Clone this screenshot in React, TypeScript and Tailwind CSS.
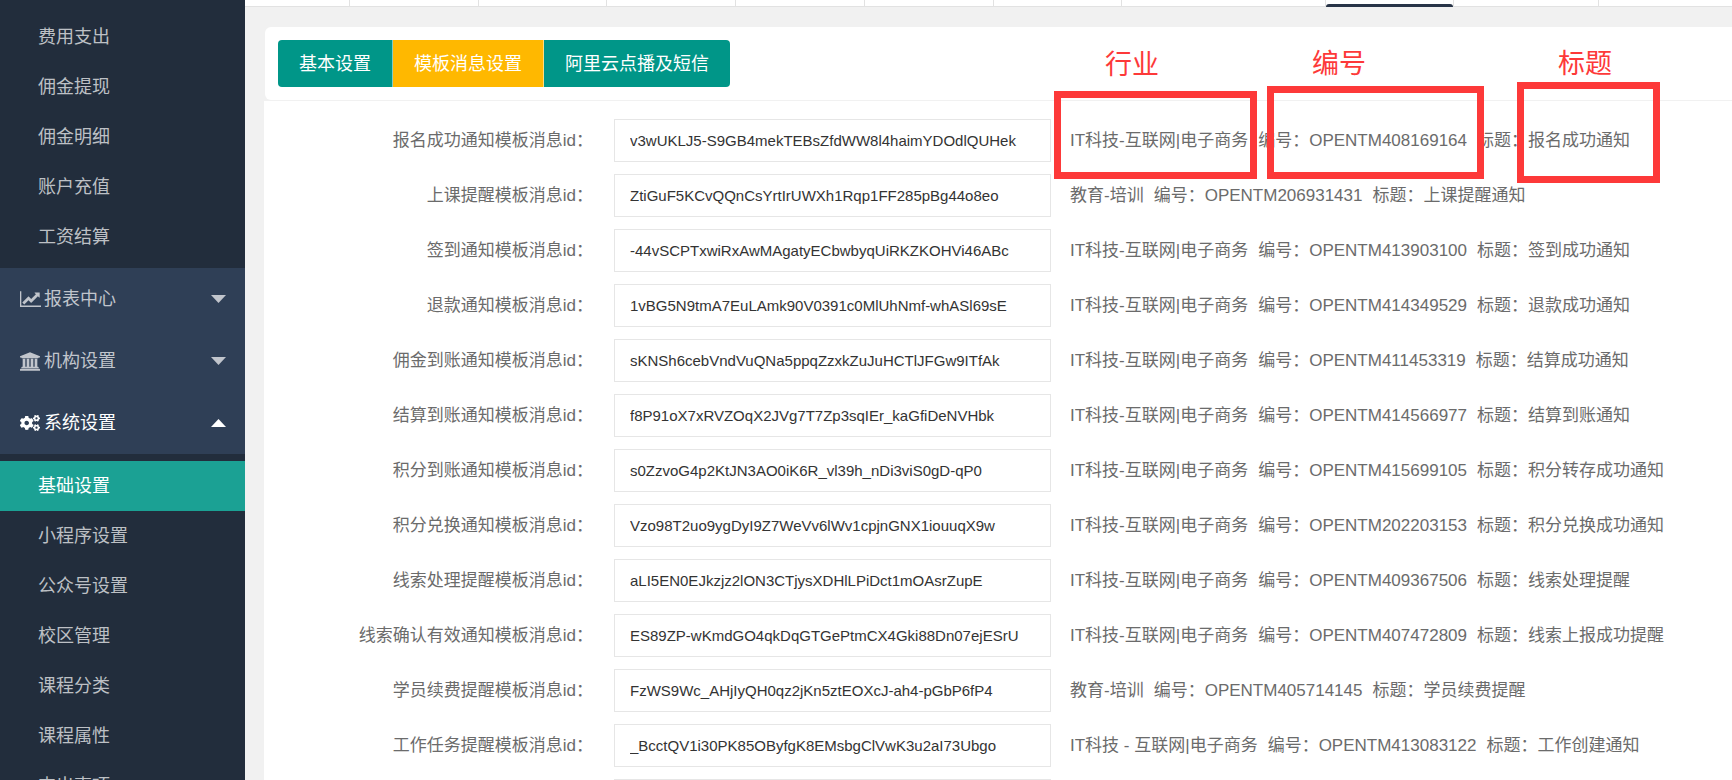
import classNames from "clsx";
import { useState } from "react";
import { FaCogs } from "react-icons/fa";

const financeLinks = ["费用支出", "佣金提现", "佣金明细", "账户充值", "工资结算"];

const systemLinks = [
  "基础设置",
  "小程序设置",
  "公众号设置",
  "校区管理",
  "课程分类",
  "课程属性",
  "支出事项",
];

const pageTabs = [
  { id: "t1", width: "w-[105px]" },
  { id: "t2", width: "w-[129px]" },
  { id: "t3", width: "w-[128px]" },
  { id: "t4", width: "w-[129px]" },
  { id: "t5", width: "w-[129px]" },
  { id: "t6", width: "w-[129px]" },
  { id: "t7", width: "w-[128px]" },
  { id: "t8", width: "w-[204px]" },
  { id: "t9", width: "w-[128px]", active: true },
  { id: "t10", width: "w-[145px]" },
];

const settingTabs = ["基本设置", "模板消息设置", "阿里云点播及短信"];

const IT = "IT科技-互联网|电子商务";
const EDU = "教育-培训";

const templates = [
  {
    label: "报名成功通知模板消息id：",
    value: "v3wUKLJ5-S9GB4mekTEBsZfdWW8l4haimYDOdlQUHek",
    industry: IT,
    code: "OPENTM408169164",
    title: "报名成功通知",
  },
  {
    label: "上课提醒模板消息id：",
    value: "ZtiGuF5KCvQQnCsYrtIrUWXh1Rqp1FF285pBg44o8eo",
    industry: EDU,
    code: "OPENTM206931431",
    title: "上课提醒通知",
  },
  {
    label: "签到通知模板消息id：",
    value: "-44vSCPTxwiRxAwMAgatyECbwbyqUiRKZKOHVi46ABc",
    industry: IT,
    code: "OPENTM413903100",
    title: "签到成功通知",
  },
  {
    label: "退款通知模板消息id：",
    value: "1vBG5N9tmA7EuLAmk90V0391c0MlUhNmf-whASl69sE",
    industry: IT,
    code: "OPENTM414349529",
    title: "退款成功通知",
  },
  {
    label: "佣金到账通知模板消息id：",
    value: "sKNSh6cebVndVuQNa5ppqZzxkZuJuHCTlJFGw9ITfAk",
    industry: IT,
    code: "OPENTM411453319",
    title: "结算成功通知",
  },
  {
    label: "结算到账通知模板消息id：",
    value: "f8P91oX7xRVZOqX2JVg7T7Zp3sqIEr_kaGfiDeNVHbk",
    industry: IT,
    code: "OPENTM414566977",
    title: "结算到账通知",
  },
  {
    label: "积分到账通知模板消息id：",
    value: "s0ZzvoG4p2KtJN3AO0iK6R_vl39h_nDi3viS0gD-qP0",
    industry: IT,
    code: "OPENTM415699105",
    title: "积分转存成功通知",
  },
  {
    label: "积分兑换通知模板消息id：",
    value: "Vzo98T2uo9ygDyI9Z7WeVv6lWv1cpjnGNX1iouuqX9w",
    industry: IT,
    code: "OPENTM202203153",
    title: "积分兑换成功通知",
  },
  {
    label: "线索处理提醒模板消息id：",
    value: "aLI5EN0EJkzjz2lON3CTjysXDHlLPiDct1mOAsrZupE",
    industry: IT,
    code: "OPENTM409367506",
    title: "线索处理提醒",
  },
  {
    label: "线索确认有效通知模板消息id：",
    value: "ES89ZP-wKmdGO4qkDqGTGePtmCX4Gki88Dn07ejESrU",
    industry: IT,
    code: "OPENTM407472809",
    title: "线索上报成功提醒",
  },
  {
    label: "学员续费提醒模板消息id：",
    value: "FzWS9Wc_AHjIyQH0qz2jKn5ztEOXcJ-ah4-pGbP6fP4",
    industry: EDU,
    code: "OPENTM405714145",
    title: "学员续费提醒",
  },
  {
    label: "工作任务提醒模板消息id：",
    value: "_BcctQV1i30PK85OByfgK8EMsbgClVwK3u2aI73Ubgo",
    industry: "IT科技 - 互联网|电子商务",
    code: "OPENTM413083122",
    title: "工作创建通知",
  },
  { label: "", value: "", industry: "", code: "", title: "" },
];

const ChartIcon = () => (
  <svg viewBox="0 0 2048 1536" className="h-4 w-[21px]" fill="currentColor" aria-hidden="true">
    <path d="M2048 1408v128H0V0h128v1408h1920zM1920 160v435q0 21-19.5 29.5T1865 617l-121-121-633 633q-10 10-23 10t-23-10l-233-233-416 416-192-192 585-585q10-10 23-10t23 10l233 233 464-464-121-121q-16-16-7.5-35.5T1453 128h435q14 0 23 9t9 23z" />
  </svg>
);

const BankIcon = () => (
  <svg viewBox="0 0 1920 1792" className="h-[19px] w-5" fill="currentColor" aria-hidden="true">
    <path d="M960 0l960 384v128h-128q0 26-20.500 45t-48.500 19H197q-28 0-48.500-19T128 512H0V384zM256 640h256v768h128V640h256v768h128V640h256v768h128V640h256v768h59q28 0 48.500 19t20.500 45v64H128v-64q0-26 20.500-45t48.500-19h59V640zM1851 1600q28 0 48.500 19t20.500 45v128H0v-128q0-26 20.500-45t48.500-19h1782z" />
  </svg>
);

const Caret = ({ up }: { up?: boolean }) => (
  <svg viewBox="0 0 15 8" className={classNames("h-2 w-[15px]", up && "rotate-180")} fill="currentColor" aria-hidden="true">
    <path d="M0 0h15L7.500 8z" />
  </svg>
);

const MenuGroup = ({ name, icon, open }: { name: string; icon: React.ReactNode; open?: boolean }) => (
  <button
    type="button"
    aria-expanded={!!open}
    className={classNames(
      "flex h-[62px] w-full items-center bg-[#2f3f56] pl-5 pr-[19px]",
      open ? "text-white" : "text-[#c1c5cc]"
    )}
  >
    <span className="flex w-6 shrink-0 items-center">{icon}</span>
    <span className="flex-1 text-left">{name}</span>
    <Caret up={open} />
  </button>
);

const MenuLink = ({ name, active }: { name: string; active?: boolean }) => (
  <li>
    <a
      href="#"
      className={classNames(
        "flex h-[50px] items-center pl-[38px]",
        active ? "bg-[#1ba194] text-white" : "text-[#bdc0c5]"
      )}
    >
      {name}
    </a>
  </li>
);

// red frames and captions drawn over the first row of hints
const Annotations = () => (
  <div className="pointer-events-none text-[27px] leading-[36px] text-[#fd3939]">
    <span className="absolute left-[1105px] top-[47px]">行业</span>
    <span className="absolute left-[1312px] top-[46px]">编号</span>
    <span className="absolute left-[1558px] top-[46px]">标题</span>
    <div className="absolute left-[1054px] top-[91px] h-[88px] w-[203px] border-[7px] border-[#fd3939]" />
    <div className="absolute left-[1267px] top-[86px] h-[93px] w-[217px] border-[7px] border-[#fd3939]" />
    <div className="absolute left-[1517px] top-[82px] h-[101px] w-[143px] border-[7px] border-[#fd3939]" />
  </div>
);

export default function App() {
  const [current, setCurrent] = useState("模板消息设置");

  return (
    <div className="relative flex h-screen overflow-hidden bg-[#f1f1f1] font-['Liberation_Sans','Noto_Sans_CJK_SC',sans-serif] text-[18px] leading-[24px]">
      <nav className="w-[245px] shrink-0 overflow-hidden bg-[#222d3c]">
        <ul className="pb-[6px] pt-3">
          {financeLinks.map((name) => (
            <MenuLink key={name} name={name} />
          ))}
        </ul>
        <MenuGroup name="报表中心" icon={<ChartIcon />} />
        <MenuGroup name="机构设置" icon={<BankIcon />} />
        <MenuGroup name="系统设置" icon={<FaCogs className="size-5" />} open />
        <ul className="pt-[7px]">
          {systemLinks.map((name) => (
            <MenuLink key={name} name={name} active={name === "基础设置"} />
          ))}
        </ul>
      </nav>

      <main className="min-w-0 flex-1 overflow-hidden">
        {/* Bottom edge of the page tabs */}
        <div className="flex h-[7px] border-b border-[#e2e2e2] bg-white">
          {pageTabs.map(({ id, width, active }) => (
            <div key={id} className={classNames("flex h-[7px] shrink-0 items-end border-r border-[#e2e2e2]", width)}>
              {active && <div className="h-[3px] w-full rounded-t-sm bg-[#283447]" />}
            </div>
          ))}
        </div>

        <div className="pl-[19px] pt-5">
          <div className="ml-px rounded-l-md bg-white px-[13px] py-[13px]">
            <div className="flex">
              {settingTabs.map((name) => (
                <button
                  key={name}
                  type="button"
                  onClick={() => setCurrent(name)}
                  className={classNames(
                    "h-[47px] border-r border-white/50 px-[21px] text-white first:rounded-l-sm last:rounded-r-sm last:border-r-0",
                    name === current ? "bg-[#ffb800]" : "bg-[#009688]"
                  )}
                >
                  {name}
                </button>
              ))}
            </div>
          </div>

          <form className="mt-px flex flex-col gap-3 bg-white pt-[18px] text-[17px] text-[#6b6b6b]">
            {templates.map(({ label, value, industry, code, title }, i) => (
              <div key={i} className="flex items-center whitespace-nowrap">
                <label htmlFor={`tpl-${i}`} className="w-[350px] shrink-0 pr-[21px] text-right">
                  {label}
                </label>
                <input
                  id={`tpl-${i}`}
                  type="text"
                  defaultValue={value}
                  className="h-[43px] w-[437px] shrink-0 border border-[#e6e6e6] bg-white px-[15px] text-[15px] text-[#333] outline-none"
                />
                {code && (
                  <p className="flex gap-[10px] pl-[19px]">
                    <span>{industry}</span>
                    <span>编号：{code}</span>
                    <span>标题：{title}</span>
                  </p>
                )}
              </div>
            ))}
          </form>
        </div>
      </main>

      <Annotations />
    </div>
  );
}
